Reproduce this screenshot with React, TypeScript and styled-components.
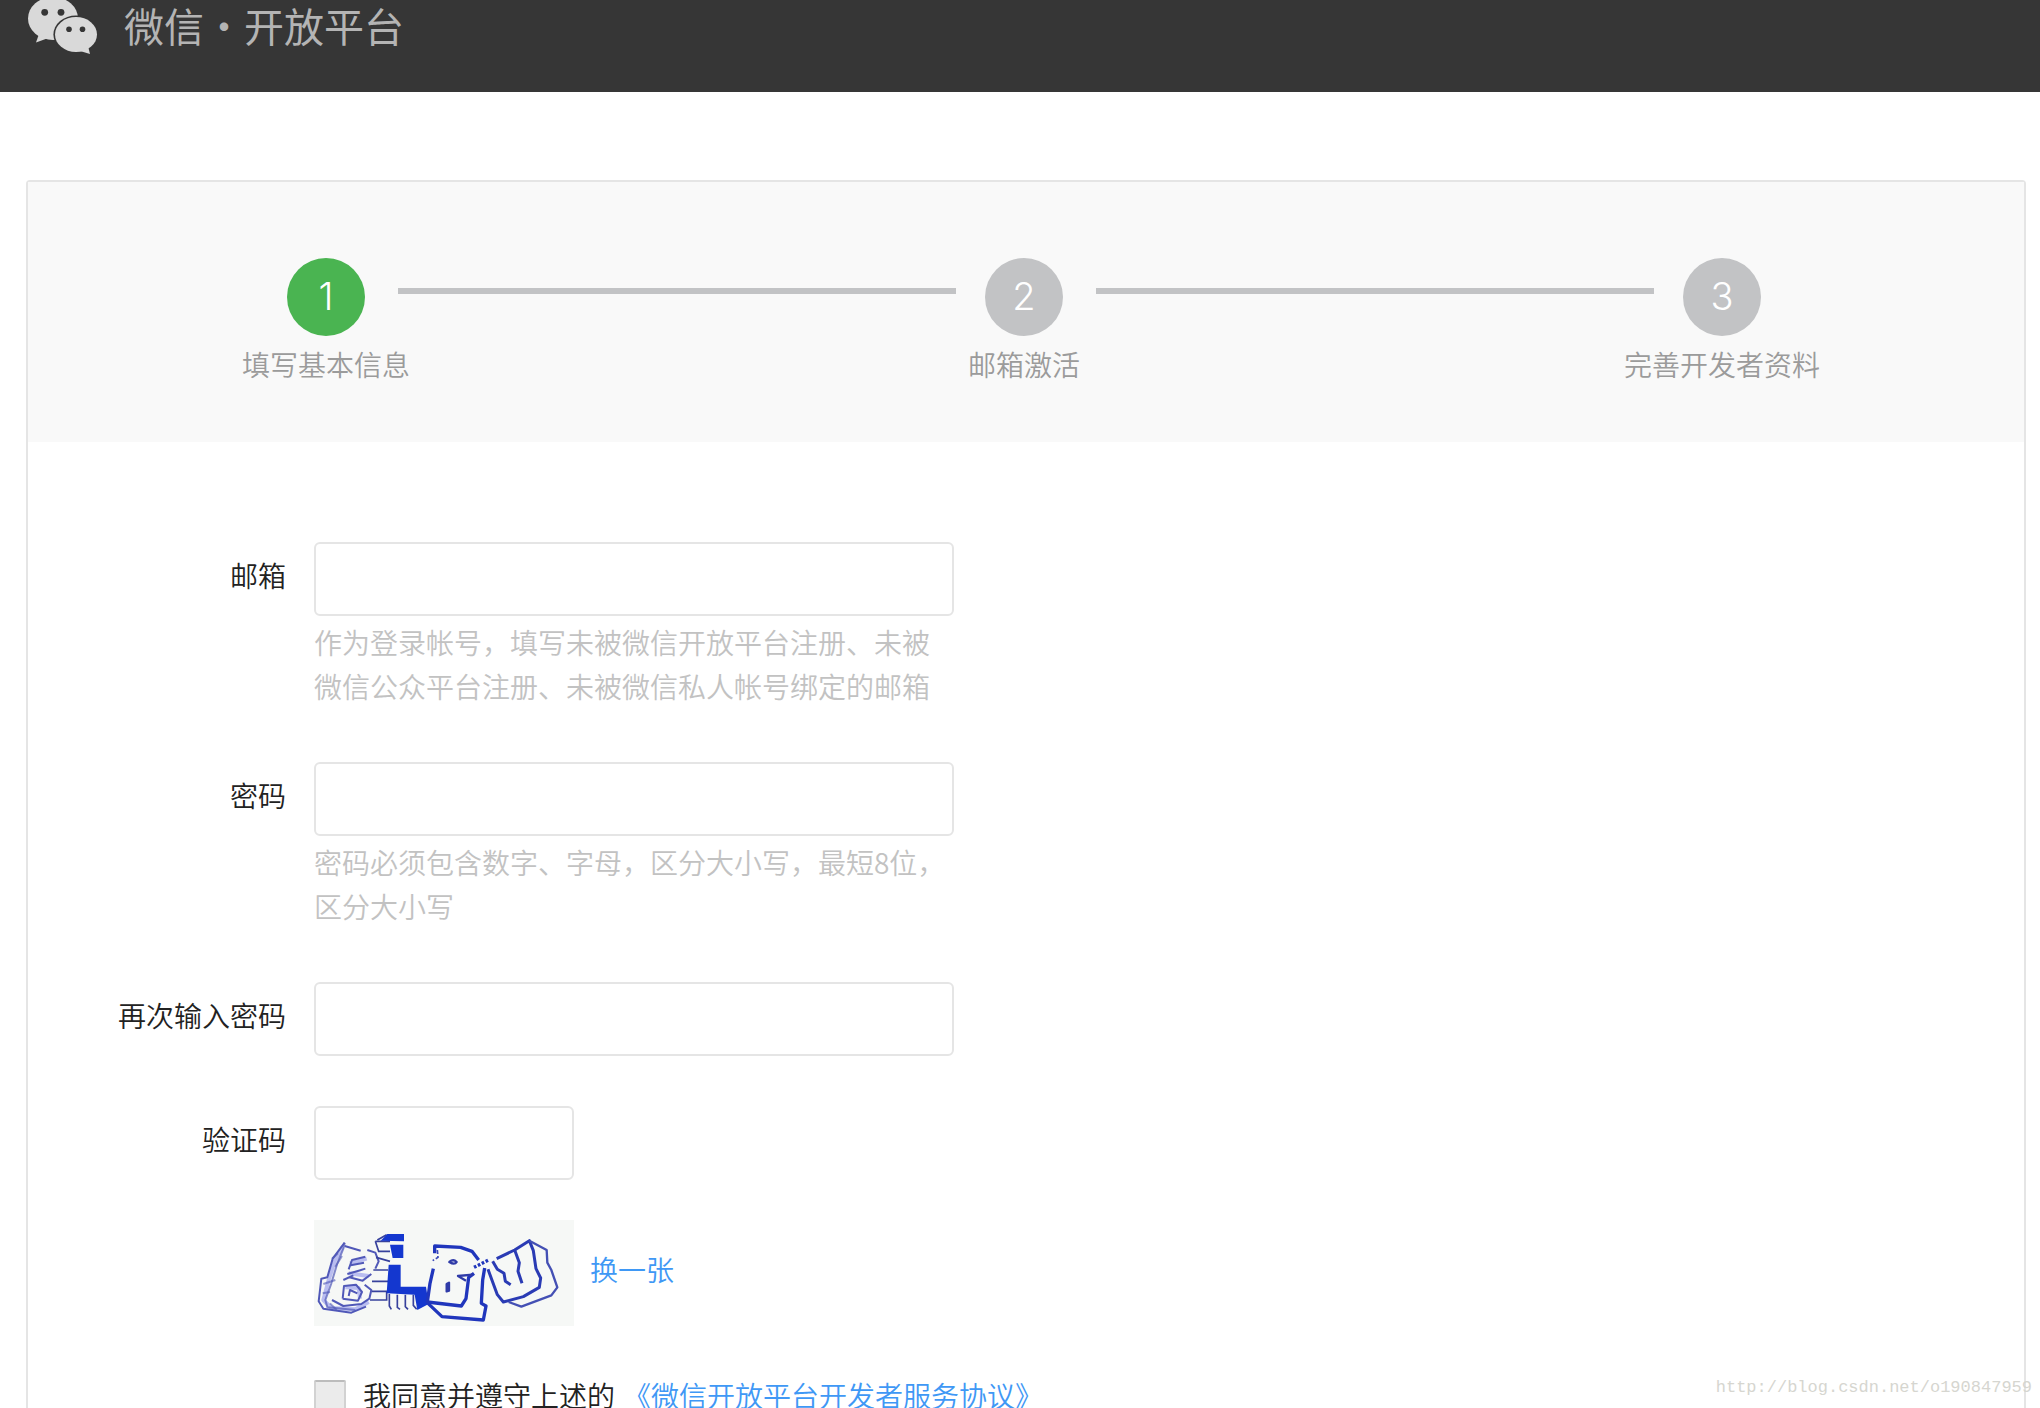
import React from "react";
import styled, { createGlobalStyle } from "styled-components";

const GlobalStyle = createGlobalStyle`
  * { box-sizing: border-box; }
  html, body { margin: 0; padding: 0; background: #fff; }
  body, input {
    font-family: "Noto Sans CJK SC", "Liberation Sans", sans-serif;
    font-weight: 350;
    font-size: 28px;
    line-height: 44px;
    color: #222;
  }
`;

const Page = styled.div`
  position: relative;
  display: flex;
  flex-direction: column;
  height: 100vh;
  overflow: hidden;
`;

const Header = styled.header`
  display: flex;
  flex: none;
  align-items: flex-start;
  gap: 26px;
  height: 92px;
  padding-left: 28px;
  background: #363636;
`;

const Logo = styled.svg`
  flex: none;
  width: 70px;
  height: 56px;
`;

const Brand = styled.h1`
  margin: 0;
  font-size: 40px;
  font-weight: 400;
  line-height: 50px;
  color: #b4b4b4;
`;

const Card = styled.main`
  flex: 1 0 auto;
  margin: 88px 14px 0 26px;
  border: 2px solid #e5e5e5;
  border-bottom: 0;
  border-radius: 4px 4px 0 0;
`;

const Steps = styled.ol`
  display: flex;
  margin: 0;
  padding: 76px 234px 56px 230px;
  list-style: none;
  background: #f9f9f9;
`;

const Step = styled.li<{ $grow?: boolean }>`
  display: flex;
  flex: ${(p) => (p.$grow ? "1 1 0" : "none")};
`;

const StepBody = styled.div`
  display: flex;
  flex: none;
  flex-direction: column;
  align-items: center;
  gap: 6px;
  width: 136px;
  color: #9b9b9b;
  white-space: nowrap;
`;

const StepNumber = styled.span<{ $active?: boolean }>`
  width: 78px;
  height: 78px;
  border-radius: 50%;
  background: ${(p) => (p.$active ? "#4ab451" : "#c2c3c5")};
  color: #fff;
  font-family: Inter, "Liberation Sans", sans-serif;
  font-size: 38px;
  font-weight: 300;
  line-height: 76px;
  text-align: center;
`;

const StepLine = styled.span`
  flex: 1;
  height: 6px;
  margin: 30px 0 0 4px;
  background: #c2c3c5;
`;

const Form = styled.form`
  display: flex;
  flex-direction: column;
  gap: 50px;
  padding: 100px 28px 0 0;
`;

const Row = styled.div`
  display: grid;
  grid-template-columns: 258px minmax(0, 1fr);
  column-gap: 28px;
`;

const Label = styled.label`
  line-height: 66px;
  text-align: right;
`;

const Field = styled.div`
  grid-column: 2;
`;

const TextInput = styled.input<{ $short?: boolean }>`
  display: block;
  width: ${(p) => (p.$short ? "260px" : "640px")};
  height: 74px;
  padding: 0 20px;
  border: 2px solid #e5e5e5;
  border-radius: 6px;
  outline: none;
  background: #fff;
`;

const Hint = styled.p`
  width: 640px;
  margin: 0;
  padding: 4px 0;
  color: #c2c2c2;
`;

const CaptchaRow = styled.div`
  display: flex;
  gap: 16px;
  margin-top: 40px;
`;

const CaptchaImage = styled.svg`
  width: 260px;
  height: 106px;
  background: #f6f8f6;
`;

const Link = styled.a`
  color: #3f98f5;
  text-decoration: none;
`;

const RefreshLink = styled(Link)`
  line-height: 98px;
`;

const Agreement = styled.div`
  display: flex;
  align-items: flex-start;
  padding-top: 4px;
  line-height: 30px;
`;

const CheckBox = styled.input`
  appearance: none;
  flex: none;
  width: 32px;
  height: 32px;
  margin: 0 17px 0 0;
  border: 2px solid #d2d2d2;
  border-top-color: #bcbcbc;
  border-radius: 2px;
  background: #ebebeb;

  &:checked { background: #4ab451; }
`;

const AgreeLabel = styled.label`
  margin-right: 8px;
`;

const Watermark = styled.small`
  position: absolute;
  right: 8px;
  bottom: 8px;
  font-family: "Liberation Mono", monospace;
  font-size: 17px;
  font-weight: 400;
  line-height: 24px;
  color: #d6d6d0;
`;

const steps = ["填写基本信息", "邮箱激活", "完善开发者资料"];

function WeChatLogo() {
  return (
    <Logo viewBox="28 0 70 56" aria-hidden="true">
      <g fill="#d9d9d9">
        <ellipse cx="53" cy="18.5" rx="25" ry="21.5" />
        <path d="M39 34 L36 42.5 L47 38.5 Z" />
      </g>
      <ellipse cx="76" cy="34.5" rx="22.6" ry="19" fill="#363636" />
      <g fill="#d9d9d9">
        <ellipse cx="76" cy="34.5" rx="21" ry="17.5" />
        <path d="M80 51 L90 54 L88 46 Z" />
      </g>
      <g fill="#363636">
        <circle cx="44.7" cy="12.3" r="3.4" />
        <circle cx="61" cy="12.3" r="3.4" />
        <circle cx="69" cy="29.2" r="2.8" />
        <circle cx="82.5" cy="29.2" r="2.8" />
      </g>
    </Logo>
  );
}

function Captcha() {
  return (
    <CaptchaImage viewBox="72 60 780 318" preserveAspectRatio="none" role="img" aria-label="验证码图片">
      <g fill="none" stroke="#b9bdf0" strokeWidth="12" strokeLinejoin="round">
        <path d="M158 140 L134 184 L116 240 L100 300 L124 324 L196 328 L236 306" />
        <path d="M180 190 L230 176 M176 220 L236 228 M166 262 L206 264 L210 296" />
      </g>
      <g fill="none" stroke="#5058b8" strokeWidth="6" strokeLinejoin="round">
        <path d="M164 128 L128 176 L112 232 L94 236 L86 304 L100 326 L184 338 L228 320" />
        <path d="M164 128 L160 146 L142 190 L124 250 L106 300 L112 322 L196 330" opacity=".7" />
        <path d="M164 138 L212 152 M232 150 L256 158 L266 184 L256 206" />
        <path d="M176 208 L186 180 L226 170 M182 196 L222 188 M172 222 L206 212 L226 206" />
        <path d="M160 240 L190 226 M178 232 L218 242 L244 222" />
        <path d="M158 296 L162 258 L198 254 L216 276 L204 302 L158 296 M176 288 L180 270 L202 280" />
        <path d="M224 254 L244 270 L238 296 L214 312 L160 318 L126 300" />
        <path d="M100 252 L136 240 M98 280 L120 276 M120 310 L140 330 M126 176 L144 160 M136 200 L156 168" opacity=".6" />
      </g>
      <g fill="none" stroke="#37419c" strokeWidth="5">
        <path d="M256 124 H300 M256 124 L266 154 H300 M258 172 L300 184 M250 210 H294 M246 244 H294 M246 274 H294 M240 300 H290 V274" />
        <path d="M262 120 L290 104" />
        <path d="M298 282 V318 L304 328 M322 284 V322 L330 328 M346 284 V320 L354 328 M370 284 V316 L380 328" />
      </g>
      <g fill="#1437cf">
        <path d="M272 122 L292 102 H342 V124 Z" />
        <path d="M300 134 H340 V174 H308 Z" />
        <path d="M296 194 H332 V260 H408 L416 312 L382 330 L374 284 L290 280 Z" />
      </g>
      <g fill="none" stroke="#2036bc" strokeWidth="10" strokeLinejoin="round">
        <path d="M434 160 V138 L512 142 L546 154 L566 180" />
        <path d="M430 206 L420 250 L412 306 L514 318 L528 296 L536 232 L552 220" />
        <path d="M414 310 L456 350 L580 360 L588 318 L574 310 L578 240 L584 204" />
        <path d="M552 202 L596 180" strokeDasharray="8 5" />
      </g>
      <path d="M442 150 L444 172 L428 182" fill="none" stroke="#3a48b8" strokeWidth="5" strokeDasharray="12 6" />
      <g fill="none" stroke="#2f3ba8" strokeWidth="7" strokeLinejoin="round">
        <path d="M478 186 Q490 176 500 186 Q494 196 478 186 Z" />
        <path d="M470 274 V252 L477 248 V272 Z" />
        <path d="M548 224 L504 228 L528 242" />
      </g>
      <g fill="none" stroke="#2a3bb4" strokeWidth="9" strokeLinejoin="round">
        <path d="M620 176 L674 150 L718 122 L730 152 L738 206 L752 234 L748 262 L700 290 L640 306 L622 284 L594 208" />
        <path d="M674 150 L688 188 L684 214 L696 250" />
        <path d="M608 184 L622 208 L642 220 L646 244 L662 254" />
      </g>
      <g fill="none" stroke="#4450b4" strokeWidth="7" strokeLinejoin="round">
        <path d="M718 122 L770 150 L772 188 L784 210 L802 262 L784 286 L694 320 L656 306" />
      </g>
    </CaptchaImage>
  );
}

export default function App() {
  return (
    <Page lang="zh-CN">
      <GlobalStyle />
      <Header>
        <WeChatLogo />
        <Brand>微信・开放平台</Brand>
      </Header>
      <Card>
        <Steps>
          {steps.map((name, i) => (
            <Step key={name} $grow={i < steps.length - 1}>
              <StepBody>
                <StepNumber $active={i === 0}>{i + 1}</StepNumber>
                <span>{name}</span>
              </StepBody>
              {i < steps.length - 1 && <StepLine />}
            </Step>
          ))}
        </Steps>
        <Form>
          <Row>
            <Label htmlFor="email">邮箱</Label>
            <Field>
              <TextInput id="email" type="email" />
              <Hint>作为登录帐号，填写未被微信开放平台注册、未被微信公众平台注册、未被微信私人帐号绑定的邮箱</Hint>
            </Field>
          </Row>
          <Row>
            <Label htmlFor="password">密码</Label>
            <Field>
              <TextInput id="password" type="password" />
              <Hint>密码必须包含数字、字母，区分大小写，最短8位，区分大小写</Hint>
            </Field>
          </Row>
          <Row>
            <Label htmlFor="confirm">再次输入密码</Label>
            <Field>
              <TextInput id="confirm" type="password" />
            </Field>
          </Row>
          <Row>
            <Label htmlFor="captcha">验证码</Label>
            <Field>
              <TextInput id="captcha" type="text" $short />
              <CaptchaRow>
                <Captcha />
                <RefreshLink href="#captcha">换一张</RefreshLink>
              </CaptchaRow>
            </Field>
          </Row>
          <Row>
            <Field>
              <Agreement>
                <CheckBox id="agree" type="checkbox" />
                <AgreeLabel htmlFor="agree">我同意并遵守上述的</AgreeLabel>
                <Link href="#agreement">《微信开放平台开发者服务协议》</Link>
              </Agreement>
            </Field>
          </Row>
        </Form>
      </Card>
      <Watermark>http://blog.csdn.net/o190847959</Watermark>
    </Page>
  );
}
